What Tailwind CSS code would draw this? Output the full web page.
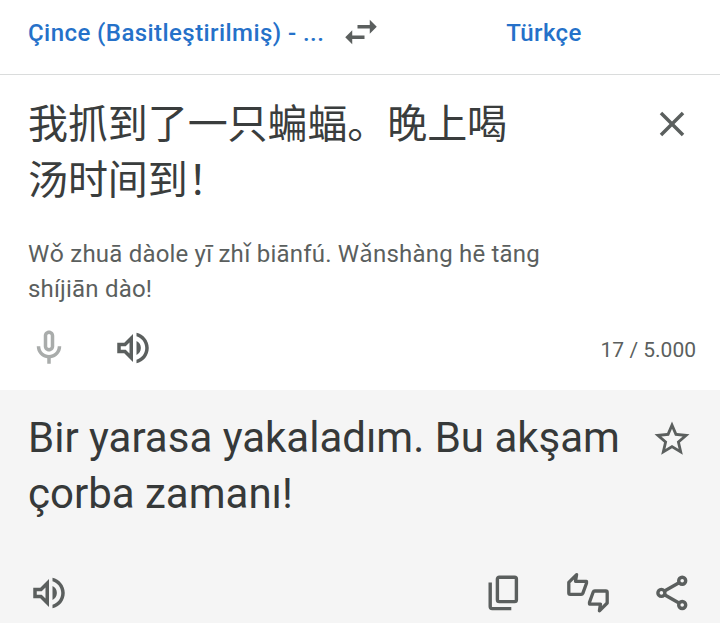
<!DOCTYPE html>
<html lang="tr">
  <head>
    <meta charset="UTF-8" />
    <meta name="viewport" content="width=device-width, initial-scale=1.0" />
    <title>Çeviri</title>
    <script src="https://cdn.jsdelivr.net/npm/@tailwindcss/browser@4"></script>
  </head>

  <body class="bg-white font-['Roboto','Noto_Sans_CJK_SC',sans-serif] text-[#5b5f5e]">
    <div class="flex h-[623px] w-[720px] flex-col overflow-hidden">
      <!-- language bar -->
      <header class="flex h-[75px] shrink-0 border-b border-[#dadcdc] text-2xl font-medium tracking-[0.43px] text-[#2571c9]">
        <button class="mt-[17px] ml-7 h-8 w-[312px] text-left leading-8 whitespace-nowrap">
          Çince (Basitleştirilmiş) - ...
        </button>
        <button class="mt-[11px] h-[42px] w-[42px] text-[#5b5f5e]" aria-label="Dilleri değiştir">
          <svg class="h-[42px] w-[42px]" viewBox="0 0 24 24" fill="currentColor">
            <path d="M6.99 11L3 15l3.99 4v-3H14v-2H6.99v-3zM21 9l-3.99-4v3H10v2h7.01v3L21 9z" />
          </svg>
        </button>
        <button class="mt-[17px] h-8 grow pr-[14px] text-center leading-8">Türkçe</button>
      </header>

      <!-- source text -->
      <section class="flex h-[315px] shrink-0 flex-col">
        <div class="flex h-[162px] justify-between pt-5 pr-[27px] pl-7">
          <p lang="zh-CN" class="mt-[2px] w-[500px] text-[40px] leading-[56px] font-normal tracking-[-0.08px] text-[#3a3d3d]">
            我抓到了一只蝙蝠。晚上喝<br />汤时间到！
          </p>
          <button class="mt-[8px] h-[42px] w-[42px]" aria-label="Temizle">
            <svg class="h-[42px] w-[42px]" viewBox="0 0 24 24" fill="currentColor">
              <path d="M19 6.41L17.59 5 12 10.59 6.41 5 5 6.41 10.59 12 5 17.59 6.41 19 12 13.41 17.59 19 19 17.59 13.41 12z" />
            </svg>
          </button>
        </div>
        <p class="h-[90px] pl-7 text-2xl leading-[35px] tracking-[0.19px]">
          Wǒ zhuā dàole yī zhǐ biānfú. Wǎnshàng hē tāng<br />shíjiān dào!
        </p>
        <div class="flex h-[42px] items-center pr-6 pl-7">
          <button class="text-[#a9acab]" aria-label="Sesle çeviri">
            <svg class="h-[42px] w-[42px]" viewBox="0 0 24 24" fill="currentColor">
              <path d="M12 14c1.66 0 3-1.34 3-3V5c0-1.66-1.34-3-3-3S9 3.34 9 5v6c0 1.66 1.34 3 3 3zm-1-9c0-.55.45-1 1-1s1 .45 1 1v6c0 .55-.45 1-1 1s-1-.45-1-1V5zm6 6c0 2.76-2.24 5-5 5s-5-2.24-5-5H5c0 3.53 2.61 6.43 6 6.92V21h2v-3.08c3.39-.49 6-3.39 6-6.92h-2z" />
            </svg>
          </button>
          <button class="ml-[42px]" aria-label="Dinle">
            <svg class="h-[42px] w-[42px]" viewBox="0 0 24 24" fill="currentColor">
              <path d="M3 9v6h4l5 5V4L7 9H3zm7-.17v6.34L7.83 13H5v-2h2.83L10 8.83zM16.5 12A4.5 4.5 0 0 0 14 7.97v8.05c1.48-.73 2.5-2.25 2.5-4.02zM14 3.23v2.06c2.89.86 5 3.54 5 6.71s-2.11 5.85-5 6.71v2.06c4.01-.91 7-4.49 7-8.77s-2.99-7.86-7-8.77z" />
            </svg>
          </button>
          <span class="mt-1 ml-auto text-[21px] leading-8">17 / 5.000</span>
        </div>
      </section>

      <!-- translation -->
      <section class="flex grow flex-col bg-[#f5f5f5]">
        <div class="flex h-[182px] justify-between pt-5 pr-[27px] pl-7">
          <p class="text-[42px] leading-[56px] whitespace-nowrap text-[#363939]">
            Bir yarasa yakaladım. Bu akşam<br />çorba zamanı!
          </p>
          <button class="mt-[8px] h-[42px] w-[42px]" aria-label="Kaydet">
            <svg class="h-[42px] w-[42px]" viewBox="0 0 24 24" fill="currentColor">
              <path d="M22 9.24l-7.19-.62L12 2 9.19 8.63 2 9.24l5.46 4.73L5.82 21 12 17.27 18.18 21l-1.63-7.03L22 9.24zM12 15.4l-3.76 2.27 1-4.28-3.32-2.88 4.38-.38L12 6.1l1.71 4.04 4.38.38-3.32 2.88 1 4.28L12 15.4z" />
            </svg>
          </button>
        </div>
        <div class="flex h-[42px] items-center pr-[27px] pl-7">
          <button aria-label="Çeviriyi dinle">
            <svg class="h-[42px] w-[42px]" viewBox="0 0 24 24" fill="currentColor">
              <path d="M3 9v6h4l5 5V4L7 9H3zm7-.17v6.34L7.83 13H5v-2h2.83L10 8.83zM16.5 12A4.5 4.5 0 0 0 14 7.97v8.05c1.48-.73 2.5-2.25 2.5-4.02zM14 3.23v2.06c2.89.86 5 3.54 5 6.71s-2.11 5.85-5 6.71v2.06c4.01-.91 7-4.49 7-8.77s-2.99-7.86-7-8.77z" />
            </svg>
          </button>
          <div class="ml-auto flex gap-[42px]">
            <button aria-label="Kopyala">
              <svg class="h-[42px] w-[42px]" viewBox="0 0 42 42" fill="none" stroke="currentColor" stroke-width="3.4">
                <rect x="14.4" y="5.2" width="19" height="24.4" rx="1.8" />
                <path d="M7.2 10.4v24.2q0 2 2 2H28.3" />
              </svg>
            </button>
            <button aria-label="Çeviriyi değerlendir">
              <svg class="h-[42px] w-[42px] overflow-visible" viewBox="0 0 42 42" fill="none" stroke="currentColor" stroke-width="3.3" stroke-linejoin="round">
                <path d="M9.6 2.6L1.8 10.4V21q0 1.4 1.4 1.4H14.2q1.2 0 1.6-1L19.5 11.2V9.3H8.5z" />
                <path d="M32.4 38.8L40.2 31V20.4q0-1.4-1.4-1.4H27.8q-1.2 0-1.6 1L22.5 30.2V32.1H33.5z" />
              </svg>
            </button>
            <button aria-label="Paylaş">
              <svg class="h-[42px] w-[42px]" viewBox="0 0 42 42" fill="none" stroke="currentColor" stroke-width="3.4">
                <circle cx="31.2" cy="8.7" r="3.5" />
                <circle cx="10.4" cy="20.9" r="3.5" />
                <circle cx="31.2" cy="33" r="3.5" />
                <path d="M28 10.7L13.5 19M13.5 22.8L28 31.1" />
              </svg>
            </button>
          </div>
        </div>
      </section>
    </div>
  </body>
</html>
